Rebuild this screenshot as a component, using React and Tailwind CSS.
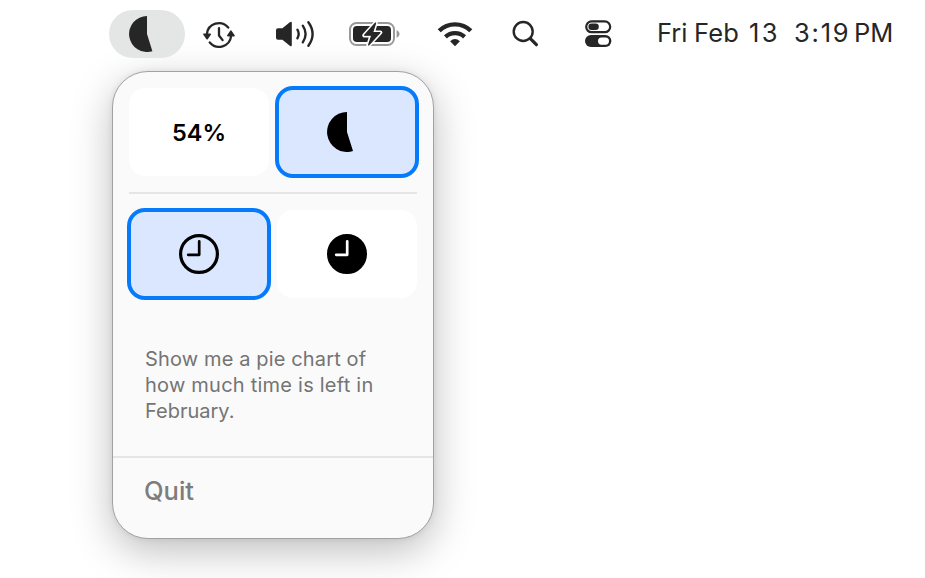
function Pie({ className }) {
  return (
    <svg viewBox="0 0 40 40" className={className} fill="currentColor">
      <path d="M20 0A20 20 0 1 0 26 39.1L20 20Z" />
    </svg>
  );
}

function TimeMachineIcon() {
  return (
    <svg width="32" height="28" viewBox="0 0 32 28" fill="none" stroke="currentColor" strokeWidth="2.3" strokeLinecap="round">
      <path d="M3.9 13A12.1 12.1 0 0 1 25.2 6.5" />
      <path d="M28.1 15A12.1 12.1 0 0 1 6.8 21.5" />
      <path d="M16 7.2V14.5L19.6 19.1" />
      <path d="M1 13.2H7.2L4.1 17.7Z" fill="currentColor" strokeWidth="1.6" strokeLinejoin="round" />
      <path d="M31 14.6H24.8L27.9 10.2Z" fill="currentColor" strokeWidth="1.6" strokeLinejoin="round" />
    </svg>
  );
}

function VolumeIcon() {
  return (
    <svg width="40" height="28" viewBox="0 0 40 28" fill="none" stroke="currentColor" strokeWidth="2.4" strokeLinecap="round">
      <path d="M3 8.2H7.4L14.8 2.2Q16.8 .8 16.8 3V25Q16.8 27.2 14.8 25.8L7.4 19.8H3Q1 19.8 1 17.8V10.2Q1 8.2 3 8.2Z" fill="currentColor" stroke="none" />
      <path d="M22.4 9.7Q25 14 22.4 18.3" />
      <path d="M27.8 5.7Q33.4 14 27.8 22.3" />
      <path d="M33.4 2.2Q41.8 14 33.4 25.8" />
    </svg>
  );
}

function BatteryIcon() {
  return (
    <svg width="52" height="28" viewBox="0 0 52 28" fill="none">
      <rect x="1" y="3" width="44" height="22" rx="6.5" stroke="#999" strokeWidth="2" />
      <path d="M47.6 9.9Q50.6 11.3 50.6 14T47.6 18.1Z" fill="#999" />
      <rect x="4" y="6" width="38" height="16" rx="3.8" fill="currentColor" />
      <path d="M26.8 2.6L15.2 15.4H22.4L19.2 25.6L31.4 12.4H24Z" fill="currentColor" stroke="#fefefe" strokeWidth="4" strokeLinejoin="round" />
      <path d="M26.6 3L15.6 15.2H22.8L19.6 25L31 12.6H23.6Z" fill="currentColor" stroke="currentColor" strokeWidth="1.2" strokeLinejoin="round" />
    </svg>
  );
}

function WifiIcon() {
  return (
    <svg width="36" height="28" viewBox="0 0 36 28" fill="none" stroke="currentColor">
      <path d="M2.2 10.8A22.6 22.6 0 0 1 33.8 10.8" strokeWidth="4.4" />
      <path d="M8.4 16.9A14 14 0 0 1 27.6 16.9" strokeWidth="4.2" />
      <path d="M18 26.2L13.1 21.2Q18 16.8 22.9 21.2Z" fill="currentColor" stroke="none" />
    </svg>
  );
}

function SearchIcon() {
  return (
    <svg width="28" height="28" viewBox="0 0 28 28" fill="none" stroke="currentColor" strokeLinecap="round">
      <circle cx="12.2" cy="11.5" r="9.5" strokeWidth="2.4" />
      <path d="M19.6 18.8L25.4 24.7" strokeWidth="3.2" />
    </svg>
  );
}

function ControlCenterIcon() {
  return (
    <svg width="28" height="28" viewBox="0 0 28 28" fill="none">
      <rect x="2.2" y="1.4" width="24" height="10.8" rx="5.4" stroke="currentColor" strokeWidth="2.2" />
      <rect x="4.4" y="3.6" width="10.4" height="6.4" rx="3.2" fill="currentColor" />
      <rect x="1" y="15" width="26.4" height="12" rx="6" fill="currentColor" />
      <rect x="14" y="17.5" width="11" height="7.2" rx="3.6" fill="#fff" />
    </svg>
  );
}

function Clock({ filled }) {
  return (
    <svg viewBox="0 0 40 40" className="size-10" fill="none" strokeLinecap="round" strokeLinejoin="round">
      <circle cx="20" cy="20" r="18.4" fill={filled ? "#000" : "none"} stroke="#000" strokeWidth="3.2" />
      <path d="M20.2 7.3V20.8H9.2" stroke={filled ? "#fff" : "#000"} strokeWidth="2.7" />
    </svg>
  );
}

function SelectedTile({ children }) {
  return (
    <button className="flex h-[92px] w-36 items-center justify-center rounded-[18px] border-4 border-[#057bfb] bg-[#dae7fe]">
      {children}
    </button>
  );
}

function PlainTile({ children }) {
  return (
    <button className="m-0.5 flex h-[88px] w-[140px] items-center justify-center rounded-2xl bg-white">
      {children}
    </button>
  );
}

export default function App() {
  return (
    <main className="h-[578px] w-[925px] overflow-hidden bg-white font-['Inter',sans-serif] text-[#262626]">
      <header className="flex h-[71px] items-start pt-2.5 pl-[109px]">
        <div className="flex h-12 w-[76px] items-center justify-center rounded-full bg-[#e4e5e5]">
          <Pie className="size-9" />
        </div>
        <div className="flex h-12 items-center">
          <div className="ml-[17.5px] pt-0.5"><TimeMachineIcon /></div>
          <div className="ml-[40.5px]"><VolumeIcon /></div>
          <div className="ml-[34px]"><BatteryIcon /></div>
          <div className="ml-9"><WifiIcon /></div>
          <div className="ml-[37.5px]"><SearchIcon /></div>
          <div className="ml-[45.5px]"><ControlCenterIcon /></div>
        </div>
        <div className="ml-[45px] flex h-[46px] items-center text-[25.5px] whitespace-pre">
          <span className="w-[37px]">Fri</span>
          <span className="w-[55px] tracking-[0.2px]">Feb</span>
          <span className="w-[45px] tracking-[2.5px]">13</span>
          <span className="w-[60px] tracking-[1.8px]">3:19</span>
          <span>PM</span>
        </div>
      </header>

      <section className="ml-28 flex h-[468px] w-[322px] flex-col rounded-[36px] border border-[#a2a2a2] bg-[#fafafa] shadow-[0_12px_40px_rgba(0,0,0,0.26),0_0_6px_rgba(0,0,0,0.08)]">
        <div className="mt-3.5 ml-3.5 flex gap-1">
          <PlainTile>
            <span className="pt-0.5 text-[23.5px] font-semibold text-black">54%</span>
          </PlainTile>
          <SelectedTile>
            <Pie className="size-10 text-black" />
          </SelectedTile>
        </div>
        <div className="mt-3.5 ml-4 h-0.5 w-72 shrink-0 bg-[#e5e5e5]" />
        <div className="mt-3.5 ml-3.5 flex gap-1">
          <SelectedTile>
            <Clock />
          </SelectedTile>
          <PlainTile>
            <Clock filled />
          </PlainTile>
        </div>
        <p className="mt-[46px] ml-8 h-[78px] text-[20px] leading-[26px] text-[#747474]">
          <span className="tracking-[0.14px]">Show me a pie chart of</span><br />
          <span className="tracking-[0.23px]">how much time is left in</span><br />
          <span>February.</span>
        </p>
        <div className="mt-8 h-0.5 shrink-0 bg-[#e5e5e5]" />
        <button className="mt-[15px] ml-[31px] self-start text-[25.5px] leading-9 font-medium text-[#7d7d7d]">Quit</button>
      </section>
    </main>
  );
}
